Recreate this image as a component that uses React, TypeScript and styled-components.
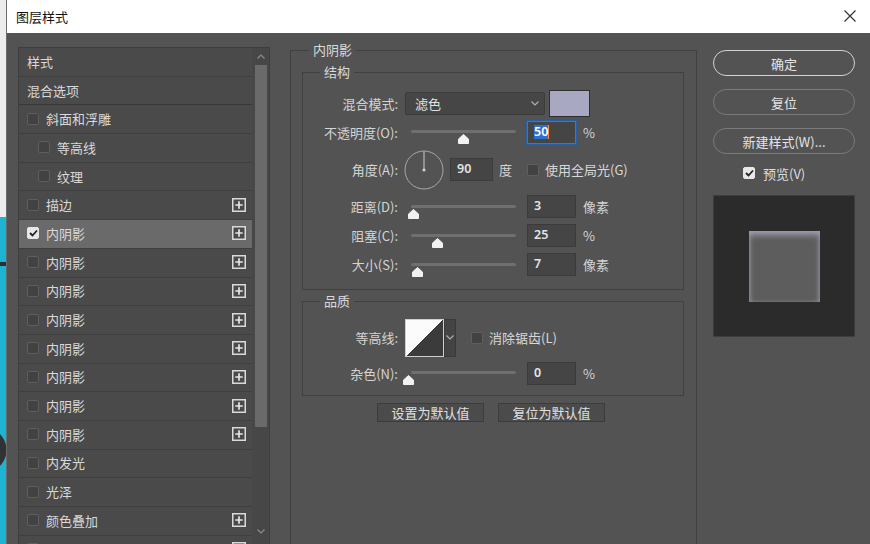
import styled, { createGlobalStyle } from 'styled-components';

const GlobalStyle = createGlobalStyle`
  html, body, #root {
    margin: 0;
    height: 100%;
    overflow: hidden;
  }
  body {
    font-family: "Noto Sans CJK SC", "Noto Sans", sans-serif;
    font-size: 13px;
    background: #535353;
    color: #d6d6d6;
  }
`;

const Screen = styled.div`
  display: flex;
  width: 870px;
  height: 100%;
`;

// bit of the desktop peeking out on the left
const Backdrop = styled.div`
  flex: none;
  width: 6px;
  background:
    radial-gradient(circle at -16px 450px, #2f3335 0 22px, transparent 23px),
    linear-gradient(to bottom, transparent 0 262px, #273034 262px 266px, transparent 266px),
    linear-gradient(to bottom, #ececec 0 217px, #1db4d4 217px);
`;

const Dialog = styled.div`
  flex: 1;
  display: flex;
  flex-direction: column;
  border-left: 1px solid #6b6b6b;
  min-width: 0;
`;

const TitleBar = styled.div`
  height: 33px;
  flex: none;
  background: #fff;
  display: flex;
  align-items: center;
  justify-content: space-between;
  padding: 0 14px 1px 9px;
  box-sizing: border-box;
`;

const Title = styled.span`
  color: #111;
  font-size: 13px;
`;

const Body = styled.div`
  flex: 1;
  display: flex;
  align-items: flex-start;
  padding: 14px 0 0 11px;
  overflow: hidden;
`;

/* ---------- left list ---------- */

const StylePanel = styled.div`
  flex: none;
  width: 252px;
  height: 520px;
  display: flex;
  box-sizing: border-box;
  border: 1px solid #3e3e3e;
  background: #4a4a4a;
  overflow: hidden;
`;

const Rows = styled.div`
  flex: 1;
  display: flex;
  flex-direction: column;
`;

const Row = styled.div<{ $active?: boolean; $indent?: number; $thick?: boolean }>`
  flex: none;
  height: 27.7px;
  display: flex;
  align-items: center;
  gap: 7px;
  padding: 0 6px 1px ${p => p.$indent ?? 8}px;
  box-sizing: border-box;
  height: 28.7px;
  border-bottom: 1px solid ${p => (p.$thick ? '#383838' : '#3f3f3f')};
  background: ${p => (p.$active ? '#6a6a6a' : 'transparent')};
  color: #d9d9d9;
  line-height: 1;
`;

const RowLabel = styled.span`
  flex: 1;
`;

const Scrollbar = styled.div`
  flex: none;
  width: 17px;
  display: flex;
  flex-direction: column;
  align-items: center;
  background: #474747;
  padding-bottom: 26px;
`;

const ScrollArrow = styled.div`
  height: 17px;
  display: flex;
  align-items: center;
  justify-content: center;
`;

const ScrollThumb = styled.div`
  width: 12px;
  height: 362px;
  background: #6a6a6a;
`;

const Spacer = styled.div`
  flex: 1;
`;

const Box = styled.span<{ $checked?: boolean }>`
  flex: none;
  width: 12px;
  height: 12px;
  box-sizing: border-box;
  border-radius: 2px;
  border: 1px solid ${p => (p.$checked ? '#e8e8e8' : '#5e5e5e')};
  background: ${p => (p.$checked ? '#e8e8e8' : '#424242')};
  display: flex;
  align-items: center;
  justify-content: center;
`;

function Check({ checked }: { checked?: boolean }) {
  return (
    <Box $checked={checked}>
      {checked && (
        <svg width="9" height="8" viewBox="0 0 9 8">
          <polyline points="1,4 3.5,6.5 8,1.5" fill="none" stroke="#222" strokeWidth="1.8" />
        </svg>
      )}
    </Box>
  );
}

function PlusIcon() {
  return (
    <svg width="14" height="14" viewBox="0 0 14 14">
      <rect x="0.75" y="0.75" width="12.5" height="12.5" fill="#4a4a4a" stroke="#dadada" strokeWidth="1.5" />
      <path d="M7 3.3v7.4M3.3 7h7.4" stroke="#e6e6e6" strokeWidth="1.7" />
    </svg>
  );
}

function Chevron({ up, color = '#8c8c8c' }: { up?: boolean; color?: string }) {
  return (
    <svg width="8" height="5" viewBox="0 0 8 5">
      <polyline
        points={up ? '0.5,4.5 4,1 7.5,4.5' : '0.5,0.5 4,4 7.5,0.5'}
        fill="none"
        stroke={color}
        strokeWidth="1.2"
      />
    </svg>
  );
}

const layers = [
  { label: '斜面和浮雕' },
  { label: '等高线', sub: true },
  { label: '纹理', sub: true },
  { label: '描边', plus: true },
  { label: '内阴影', plus: true, checked: true },
  { label: '内阴影', plus: true },
  { label: '内阴影', plus: true },
  { label: '内阴影', plus: true },
  { label: '内阴影', plus: true },
  { label: '内阴影', plus: true },
  { label: '内阴影', plus: true },
  { label: '内阴影', plus: true },
  { label: '内发光' },
  { label: '光泽' },
  { label: '颜色叠加', plus: true },
  { label: '', plus: true },
];

/* ---------- middle settings ---------- */

const Group = styled.div<{ $w?: number; $h?: number; $mt?: number }>`
  position: relative;
  flex: none;
  box-sizing: border-box;
  ${p => (p.$w ? `width: ${p.$w}px;` : '')}
  ${p => (p.$h ? `height: ${p.$h}px;` : '')}
  margin-top: ${p => p.$mt ?? 0}px;
  border: 1px solid #404040;
`;

const GroupTitle = styled.span<{ $left?: number }>`
  position: absolute;
  top: -10px;
  left: ${p => p.$left ?? 18}px;
  padding: 0 4px;
  background: #535353;
  color: #dadada;
  line-height: 18px;
`;

const OuterGroup = styled(Group)`
  margin-left: 20px;
  padding: 21px 12px 0 11px;
`;

const InnerGroup = styled(Group)<{ $pt: number; $pb: number }>`
  padding: ${p => p.$pt}px 0 ${p => p.$pb}px;
  display: flex;
  flex-direction: column;
`;

const FormRow = styled.div<{ $h: number; $mt?: number }>`
  height: ${p => p.$h}px;
  margin-top: ${p => p.$mt ?? 0}px;
  display: flex;
  align-items: center;
  line-height: 1;
`;

const Label = styled.span`
  flex: none;
  width: 95px;
  margin-right: 7px;
  text-align: right;
  color: #d4d4d4;
  white-space: nowrap;
`;

const Select = styled.div`
  width: 140px;
  height: 23px;
  box-sizing: border-box;
  border: 1px solid #3b3b3b;
  border-radius: 2px;
  background: #464646;
  display: flex;
  align-items: center;
  justify-content: space-between;
  padding: 0 5px 0 9px;
  color: #e2e2e2;
`;

const Swatch = styled.div<{ $color: string }>`
  width: 41px;
  height: 27px;
  margin-left: 4px;
  box-sizing: border-box;
  border: 1px solid #2f2f2f;
  background: ${p => p.$color};
`;

const SliderBox = styled.div`
  position: relative;
  flex: none;
  width: 122px;
  height: 20px;
`;

const Track = styled.div`
  position: absolute;
  top: 8px;
  left: 6px;
  width: 105px;
  height: 3px;
  border-radius: 2px;
  background: #6f6f6f;
`;

const Thumb = styled.svg`
  position: absolute;
  top: 12px;
`;

function Slider({ value }: { value: number }) {
  return (
    <SliderBox>
      <Track />
      <Thumb width="11" height="10" viewBox="0 0 11 10" style={{ left: 6 + value * 105 - 5.5 }}>
        <polygon points="5.5,0.5 10.5,5 10.5,9.5 0.5,9.5 0.5,5" fill="#f2f2f2" strokeLinejoin="round" stroke="#f2f2f2" />
      </Thumb>
    </SliderBox>
  );
}

const Field = styled.div<{ $w?: number; $focus?: boolean; $ml?: number }>`
  flex: none;
  width: ${p => p.$w ?? 49}px;
  height: 23px;
  margin-left: ${p => p.$ml ?? 0}px;
  box-sizing: border-box;
  border: 1px solid ${p => (p.$focus ? '#2f7ad8' : '#3b3b3b')};
  box-shadow: ${p => (p.$focus ? '0 0 0 1px #245fa8' : 'none')};
  background: #454545;
  display: flex;
  align-items: center;
  padding-left: 6px;
  font-family: "Noto Sans", sans-serif;
  font-size: 12.5px;
  font-weight: 600;
  color: #e4e4e4;
`;

const Selected = styled.span`
  background: #2e6fd2;
  color: #fff;
  padding: 1px 0;
  border-right: 1px solid #ff8a3a;
`;

const Unit = styled.span<{ $ml?: number }>`
  margin-left: ${p => p.$ml ?? 7}px;
  color: #d4d4d4;
`;

const Option = styled.span<{ $ml: number }>`
  display: flex;
  align-items: center;
  gap: 6px;
  margin-left: ${p => p.$ml}px;
  color: #d8d8d8;
`;

const Contour = styled.div`
  display: flex;
  height: 38px;
`;

const ContourPreview = styled.div`
  width: 39px;
  height: 38px;
  box-sizing: border-box;
  border: 1px solid #cfcfcf;
  background: linear-gradient(to bottom right, #fbfbfb 0 50%, #3b3b3b 50%);
`;

const ContourDrop = styled.div`
  width: 12px;
  background: #444;
  border: 1px solid #3a3a3a;
  box-sizing: border-box;
  display: flex;
  align-items: center;
  justify-content: center;
`;

const ButtonRow = styled.div`
  display: flex;
  justify-content: center;
  gap: 14px;
  margin-top: 7px;
  padding-right: 4px;
`;

const FlatButton = styled.div`
  width: 107px;
  height: 19px;
  box-sizing: border-box;
  border: 1px solid #3c3c3c;
  background: #4b4b4b;
  display: flex;
  align-items: center;
  justify-content: center;
  color: #e0e0e0;
  line-height: 1;
`;

/* ---------- right column ---------- */

const Actions = styled.div`
  flex: none;
  width: 142px;
  margin: 3px 0 0 16px;
  display: flex;
  flex-direction: column;
  gap: 13px;
`;

const Pill = styled.div<{ $primary?: boolean }>`
  height: 26px;
  box-sizing: border-box;
  border-radius: 13px;
  border: 1.5px solid ${p => (p.$primary ? '#d2d2d2' : '#7a7a7a')};
  display: flex;
  align-items: center;
  justify-content: center;
  color: #e4e4e4;
  line-height: 1;
`;

const PreviewToggle = styled.div`
  display: flex;
  align-items: center;
  gap: 8px;
  padding-left: 30px;
  margin-top: -1px;
  height: 14px;
  color: #dedede;
  line-height: 1;
`;

const PreviewPane = styled.div`
  margin-top: 2px;
  height: 142px;
  box-sizing: border-box;
  border: 1px solid #3d3d3d;
  background: #2b2b2b;
  display: flex;
  align-items: center;
  justify-content: center;
`;

const PreviewSquare = styled.div`
  width: 71px;
  height: 71px;
  background: #5d5d5d;
  box-shadow:
    inset 0 4px 6px rgba(178, 176, 200, 0.75),
    inset 0 0 4px rgba(178, 176, 200, 0.35);
`;

function Dial() {
  return (
    <svg width="40" height="40" viewBox="0 0 40 40" style={{ marginLeft: -1 }}>
      <circle cx="20" cy="20" r="19" fill="none" stroke="#a9a9a9" strokeWidth="1" />
      <line x1="20" y1="20" x2="20" y2="1.5" stroke="#cfcfcf" strokeWidth="1" />
      <circle cx="20" cy="20" r="1.6" fill="#d0d0d0" />
    </svg>
  );
}

export default function App() {
  return (
    <>
      <GlobalStyle />
      <Screen>
        <Backdrop />
        <Dialog>
          <TitleBar>
            <Title>图层样式</Title>
            <svg width="12" height="12" viewBox="0 0 12 12">
              <path d="M0.5 0.5L11.5 11.5M11.5 0.5L0.5 11.5" stroke="#333" strokeWidth="1.2" />
            </svg>
          </TitleBar>
          <Body>
            <StylePanel>
              <Rows>
                <Row>样式</Row>
                <Row $thick>混合选项</Row>
                {layers.map((l, i) => (
                  <Row key={i} $indent={l.sub ? 19 : 8} $active={l.checked}>
                    <Check checked={l.checked} />
                    <RowLabel>{l.label}</RowLabel>
                    {l.plus && <PlusIcon />}
                  </Row>
                ))}
              </Rows>
              <Scrollbar>
                <ScrollArrow>
                  <Chevron up />
                </ScrollArrow>
                <ScrollThumb />
                <Spacer />
                <ScrollArrow>
                  <Chevron />
                </ScrollArrow>
              </Scrollbar>
            </StylePanel>

            <OuterGroup $w={407} $h={520} $mt={3}>
              <GroupTitle $left={18}>内阴影</GroupTitle>

              <InnerGroup $pt={16} $pb={10}>
                <GroupTitle $left={17}>结构</GroupTitle>
                <FormRow $h={28}>
                  <Label>混合模式:</Label>
                  <Select>
                    <span>滤色</span>
                    <Chevron color="#b0b0b0" />
                  </Select>
                  <Swatch $color="#a9a8c2" />
                </FormRow>
                <FormRow $h={30}>
                  <Label>不透明度(O):</Label>
                  <Slider value={0.5} />
                  <Field $focus>
                    <Selected>50</Selected>
                  </Field>
                  <Unit>%</Unit>
                </FormRow>
                <FormRow $h={45}>
                  <Label>角度(A):</Label>
                  <Dial />
                  <Field $w={43} $ml={6}>90</Field>
                  <Unit $ml={6}>度</Unit>
                  <Option $ml={15}>
                    <Check />
                    使用全局光(G)
                  </Option>
                </FormRow>
                <FormRow $h={29}>
                  <Label>距离(D):</Label>
                  <Slider value={0.02} />
                  <Field>3</Field>
                  <Unit>像素</Unit>
                </FormRow>
                <FormRow $h={29}>
                  <Label>阻塞(C):</Label>
                  <Slider value={0.25} />
                  <Field>25</Field>
                  <Unit>%</Unit>
                </FormRow>
                <FormRow $h={29}>
                  <Label>大小(S):</Label>
                  <Slider value={0.06} />
                  <Field>7</Field>
                  <Unit>像素</Unit>
                </FormRow>
              </InnerGroup>

              <InnerGroup $pt={16} $pb={9} $mt={11}>
                <GroupTitle $left={17}>品质</GroupTitle>
                <FormRow $h={39}>
                  <Label>等高线:</Label>
                  <Contour>
                    <ContourPreview />
                    <ContourDrop>
                      <Chevron color="#b0b0b0" />
                    </ContourDrop>
                  </Contour>
                  <Option $ml={15}>
                    <Check />
                    消除锯齿(L)
                  </Option>
                </FormRow>
                <FormRow $h={26} $mt={3}>
                  <Label>杂色(N):</Label>
                  <Slider value={-0.02} />
                  <Field>0</Field>
                  <Unit>%</Unit>
                </FormRow>
              </InnerGroup>

              <ButtonRow>
                <FlatButton>设置为默认值</FlatButton>
                <FlatButton>复位为默认值</FlatButton>
              </ButtonRow>
            </OuterGroup>

            <Actions>
              <Pill $primary>确定</Pill>
              <Pill>复位</Pill>
              <Pill>新建样式(W)...</Pill>
              <PreviewToggle>
                <Check checked />
                预览(V)
              </PreviewToggle>
              <PreviewPane>
                <PreviewSquare />
              </PreviewPane>
            </Actions>
          </Body>
        </Dialog>
      </Screen>
    </>
  );
}
